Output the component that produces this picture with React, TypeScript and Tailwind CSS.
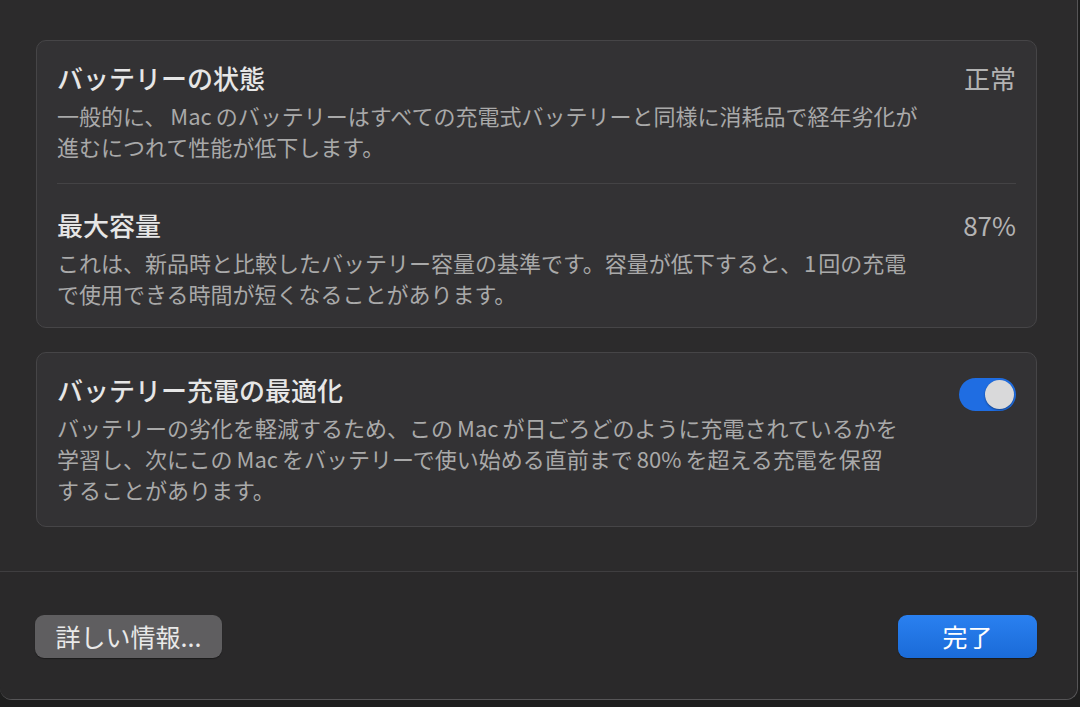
import React, { useState } from "react";

const jp = { fontFamily: '"Noto Sans CJK JP", "Noto Sans", sans-serif' };

const Toggle: React.FC<{ on: boolean; onChange: (v: boolean) => void }> = ({ on, onChange }) => (
  <button
    onClick={() => onChange(!on)}
    className={`flex items-center w-[57px] h-[33px] rounded-full px-[2px] shrink-0 ${
      on ? "bg-[#1f6de2] justify-end" : "bg-[#4a494b] justify-start"
    }`}
  >
    <span className="block w-[29px] h-[29px] rounded-full bg-[#d9d9da] shadow-[0_1px_2px_rgba(0,0,0,0.4)]" />
  </button>
);

const App: React.FC = () => {
  const [optimized, setOptimized] = useState(true);

  return (
    <div className="w-[1080px] h-[707px] bg-[#1e1e1e] overflow-hidden" style={jp}>
      {/* window */}
      <div className="w-[1078px] h-[700px] bg-[#2c2b2c] rounded-b-[12px] border-b border-r border-[#565557] flex flex-col">
        {/* content */}
        <div className="flex flex-col gap-[24px] pl-[36px] pr-[40px] pt-[40px] h-[571px] shrink-0">
          {/* card 1 */}
          <div className="rounded-[10px] border border-[#464547] bg-[#333234] px-[20px]">
            <div className="flex justify-between pt-[21px] pb-[21px] border-b border-[#444345]">
              <div>
                <div className="text-[26px] leading-[32px] font-medium text-[#e6e6e6] mb-[6px]">
                  バッテリーの状態
                </div>
                <div className="text-[22px] leading-[31px] text-[#a9a9a9]">
                  一般的に、<span className="mx-[4px]">Mac</span>のバッテリーはすべての充電式バッテリーと同様に消耗品で経年劣化が
                  <br />
                  進むにつれて性能が低下します。
                </div>
              </div>
              <div className="text-[26px] leading-[32px] text-[#b3b3b3]">正常</div>
            </div>
            <div className="flex justify-between pt-[25px] pb-[18px]">
              <div>
                <div className="text-[26px] leading-[32px] font-medium text-[#e6e6e6] mb-[6px]">
                  最大容量
                </div>
                <div className="text-[22px] leading-[31px] text-[#a9a9a9]">
                  これは、新品時と比較したバッテリー容量の基準です。容量が低下すると、<span className="mx-[2px]">1</span>回の充電
                  <br />
                  で使用できる時間が短くなることがあります。
                </div>
              </div>
              <div className="text-[26px] leading-[32px] text-[#b3b3b3]">87%</div>
            </div>
          </div>

          {/* card 2 */}
          <div className="rounded-[10px] border border-[#464547] bg-[#333234] px-[20px] pt-[21px] pb-[21px] flex justify-between">
            <div>
              <div className="text-[26px] leading-[32px] font-medium text-[#e6e6e6] mb-[6px]">
                バッテリー充電の最適化
              </div>
              <div className="text-[22px] leading-[31px] text-[#a9a9a9]">
                バッテリーの劣化を軽減するため、この<span className="mx-[4px]">Mac</span>が日ごろどのように充電されているかを
                <br />
                学習し、次にこの<span className="mx-[4px]">Mac</span>をバッテリーで使い始める直前まで<span className="mx-[4px]">80%</span>を超える充電を保留
                <br />
                することがあります。
              </div>
            </div>
            <div className="pt-[4px]">
              <Toggle on={optimized} onChange={setOptimized} />
            </div>
          </div>
        </div>

        {/* footer */}
        <div className="flex-1 border-t border-[#3f3e40] bg-[#2a292a] rounded-b-[12px] flex items-start justify-between pl-[35px] pr-[40px] pt-[43px]">
          <button className="w-[187px] h-[43px] rounded-[9px] bg-[#5f5e60] text-[25px] leading-none text-[#e9e9e9] flex items-center justify-center shadow-[0_1px_1px_rgba(0,0,0,0.35)]">
            詳しい情報...
          </button>
          <button className="w-[139px] h-[43px] rounded-[9px] bg-gradient-to-b from-[#2a80f0] to-[#1a6bd8] text-[25px] leading-none text-white flex items-center justify-center shadow-[0_1px_1px_rgba(0,0,0,0.35)]">
            完了
          </button>
        </div>
      </div>
    </div>
  );
};

export default App;
